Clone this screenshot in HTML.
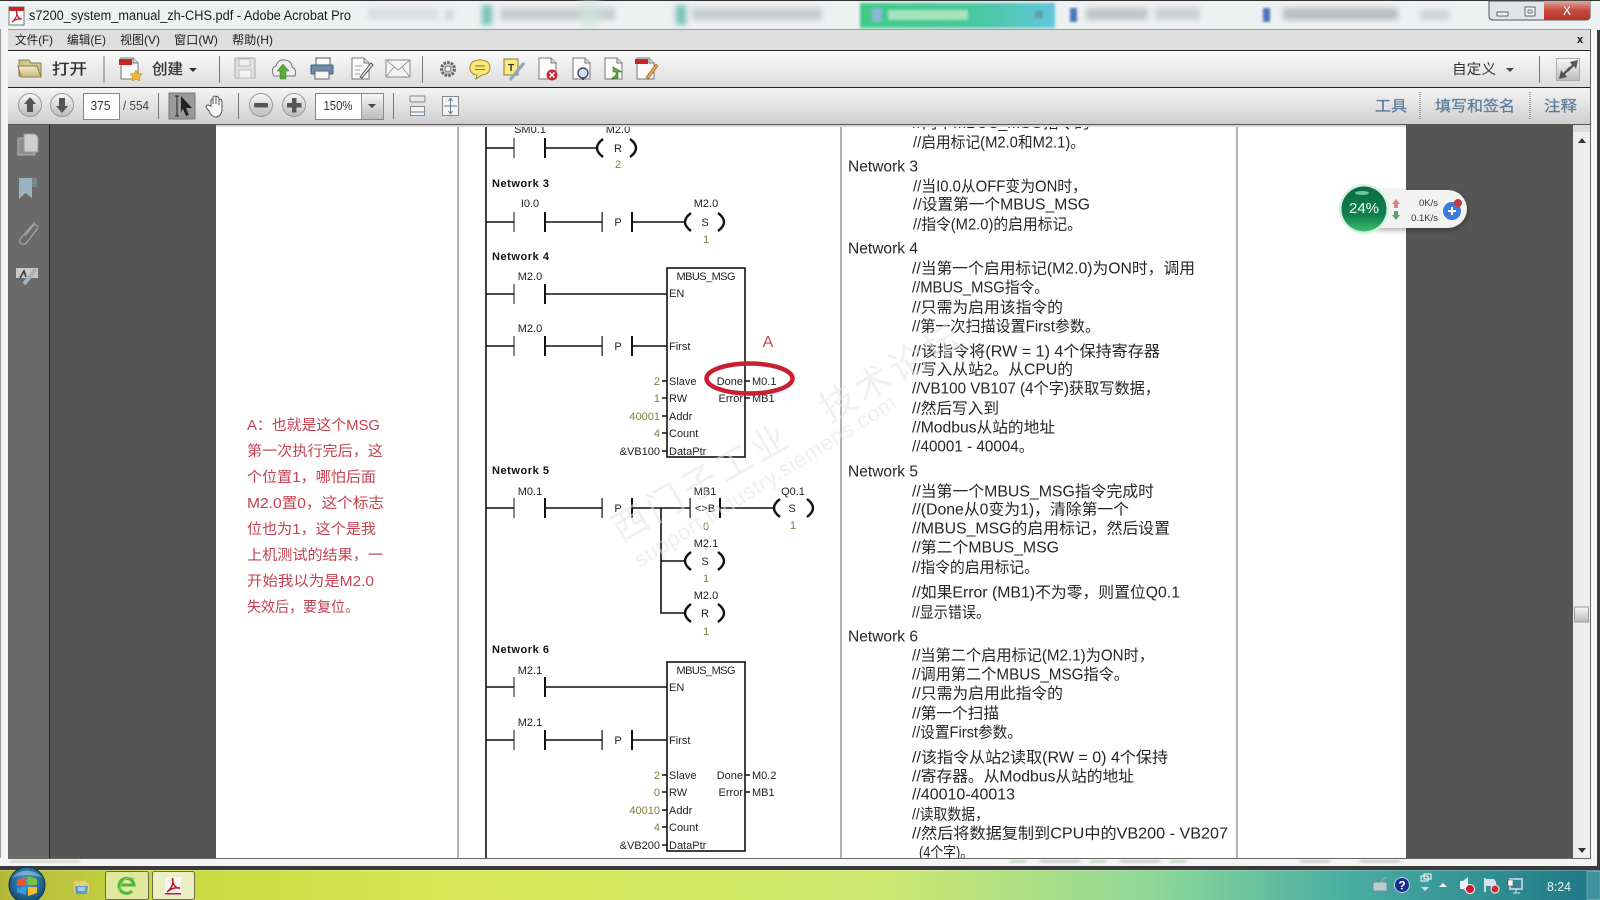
<!DOCTYPE html>
<html lang="zh"><head><meta charset="utf-8"><title>s7200_system_manual_zh-CHS.pdf - Adobe Acrobat Pro</title>
<style>
html,body{margin:0;padding:0;width:1600px;height:900px;overflow:hidden;background:#000}
svg{display:block}
text{font-family:"Liberation Sans","Noto Sans CJK SC",sans-serif}
.l{font-size:11px;fill:#222}
.m{text-anchor:middle}
.e{text-anchor:end}
.v{font-size:11px;fill:#7d7d3c;text-anchor:end}
.c{font-size:11px;fill:#7d7d3c;text-anchor:middle}
.n{font-size:11px;font-weight:bold;fill:#111}
.t{font-size:15.5px;fill:#262626}
.w{stroke:#111;stroke-width:1.6;fill:none}
.note{font-size:14.5px;fill:#c43f50}
.menu{font-size:12px;fill:#222}
.rt{font-size:15px;fill:#5f7d9c;stroke:#5f7d9c;stroke-width:.25}
</style></head><body>
<svg width="1600" height="900" viewBox="0 0 1600 900" xmlns="http://www.w3.org/2000/svg">
<defs>
<linearGradient id="gt" x1="0" y1="0" x2="0" y2="1"><stop offset="0" stop-color="#fafafa"/><stop offset="1" stop-color="#dcdcdc"/></linearGradient>
<linearGradient id="gb" x1="0" y1="0" x2="0" y2="1"><stop offset="0" stop-color="#f4f4f4"/><stop offset="1" stop-color="#cfcfcf"/></linearGradient>
<linearGradient id="gtask" x1="0" y1="0" x2="1" y2="0"><stop offset="0" stop-color="#b4b83a"/><stop offset=".1" stop-color="#c8d83e"/><stop offset=".3" stop-color="#d8ea58"/><stop offset=".55" stop-color="#cfe870"/><stop offset=".72" stop-color="#8fd898"/><stop offset=".84" stop-color="#4aaea2"/><stop offset="1" stop-color="#1f7686"/></linearGradient>
<linearGradient id="gtab" x1="0" y1="0" x2="1" y2="0"><stop offset="0" stop-color="#3fcb86"/><stop offset=".6" stop-color="#48c8a0"/><stop offset="1" stop-color="#62c6dc"/></linearGradient>
<linearGradient id="gred" x1="0" y1="0" x2="0" y2="1"><stop offset="0" stop-color="#e2a8a0"/><stop offset=".5" stop-color="#c8483c"/><stop offset="1" stop-color="#b83428"/></linearGradient>
<linearGradient id="gbtn" x1="0" y1="0" x2="0" y2="1"><stop offset="0" stop-color="#f8f8f8"/><stop offset="1" stop-color="#bbb"/></linearGradient>
<linearGradient id="ggreen" x1="0" y1="0" x2="0" y2="1"><stop offset="0" stop-color="#0c6a42"/><stop offset=".65" stop-color="#10804e"/><stop offset="1" stop-color="#3cc070"/></linearGradient>
<linearGradient id="gfold" x1="0" y1="0" x2="0" y2="1"><stop offset="0" stop-color="#f4ecc8"/><stop offset="1" stop-color="#cdb877"/></linearGradient>
<radialGradient id="gorb" cx=".5" cy=".4" r=".65"><stop offset="0" stop-color="#4aa4d8"/><stop offset="1" stop-color="#0a3f66"/></radialGradient>
<filter id="b3"><feGaussianBlur stdDeviation="3"/></filter>
<filter id="b1"><feGaussianBlur stdDeviation="1.4"/></filter>
<filter id="b05"><feGaussianBlur stdDeviation=".35"/></filter>
<filter id="sh" x="-20%" y="-30%" width="140%" height="170%"><feGaussianBlur stdDeviation="3"/></filter>
<g id="ct"><rect x="-.5" y="-10" width="1" height="20" fill="#111"/><rect x="30" y="-10" width="2" height="20" fill="#111"/></g>
<g id="pp"><rect x="-.5" y="-10" width="1.2" height="20" fill="#111"/><rect x="29" y="-10" width="2" height="20" fill="#111"/></g>
<g id="cl"><path d="M8-9Q-4 0 8 9M35-9Q47 0 35 9" fill="none" stroke="#111" stroke-width="2.4"/><path d="M0 0H2" stroke="#111" stroke-width="1.6"/></g>
<g id="doc"><path d="M1 0H13L18 5V21H1Z" fill="#fbfbfb" stroke="#777"/><path d="M13 0V5H18" fill="#ddd" stroke="#777"/></g>
</defs>

<!-- Desktop background / title bar -->
<rect width="1600" height="900" fill="#3c3c3c"/>
<rect x="0" y="0" width="1600" height="30" fill="#eef1f2"/>
<rect x="0" y="0" width="1600" height="1" fill="#333"/>
<g filter="url(#b3)">
<rect x="368" y="8" width="70" height="12" fill="#c4cdd0" opacity=".5"/>
<rect x="445" y="10" width="8" height="10" fill="#bcc6c8" opacity=".7"/>
<rect x="482" y="5" width="10" height="20" fill="#5fb8ac" opacity=".85"/>
<rect x="500" y="8" width="115" height="12" fill="#a8b4b8" opacity=".6"/>
<rect x="676" y="5" width="10" height="20" fill="#5fb8ac" opacity=".85"/>
<rect x="692" y="8" width="130" height="12" fill="#a8b4b8" opacity=".6"/>
<rect x="580" y="0" width="20" height="28" fill="#cfe8de" opacity=".6"/>
<rect x="1086" y="8" width="62" height="12" fill="#b0bac0" opacity=".8"/>
<rect x="1155" y="8" width="45" height="12" fill="#c0c8cc" opacity=".8"/>
<rect x="1283" y="8" width="115" height="12" fill="#a8b0b8" opacity=".8"/>
<rect x="1420" y="10" width="30" height="10" fill="#c4ccd0" opacity=".8"/>
</g>
<rect x="860" y="3" width="195" height="25" fill="url(#gtab)" filter="url(#b1)"/>
<g filter="url(#b1)"><rect x="872" y="8" width="10" height="14" fill="#8db8d8"/><rect x="888" y="10" width="80" height="10" fill="#a7e3bd"/><rect x="1035" y="11" width="8" height="7" fill="#5f9ca8"/>
<rect x="1070" y="8" width="7" height="14" fill="#4d74b8"/><rect x="1263" y="8" width="7" height="14" fill="#4d74b8"/></g>
<path d="M1489 1H1590V16Q1590 20 1586 20H1493Q1489 20 1489 16Z" fill="#dfe6ea" stroke="#555"/>
<path d="M1544 1H1590V16Q1590 20 1586 20H1544Z" fill="url(#gred)"/>
<rect x="1497" y="12" width="11" height="4" fill="#f2f2f2" stroke="#444" stroke-width=".8"/>
<rect x="1525" y="7" width="10" height="9" fill="#f2f2f2" stroke="#444" stroke-width=".8"/><rect x="1528" y="10" width="4" height="3" fill="none" stroke="#444" stroke-width=".7"/>
<text x="1567" y="15" font-size="13" font-weight="bold" fill="#fff" text-anchor="middle" stroke="#8a3028" stroke-width=".3">X</text>
<!-- Acrobat icon in title -->
<rect x="9" y="7" width="15" height="18" fill="#fff" stroke="#777"/><rect x="9" y="7" width="15" height="4" fill="#c8242c"/>
<path d="M12 22C15 20 18 15 16.500 11C16 15 19 19 22 19C18 18.500 14 20 12 22Z" fill="none" stroke="#c01820" stroke-width="1.200"/>
<text x="29" y="20" font-size="13.500" fill="#1a1a1a" textLength="322" lengthAdjust="spacingAndGlyphs">s7200_system_manual_zh-CHS.pdf - Adobe Acrobat Pro</text>

<!-- Window frame -->
<rect x="0" y="29" width="8" height="837" fill="#f2f2f2"/>
<rect x="0" y="29" width="1" height="840" fill="#999"/>
<rect x="1590" y="29" width="7" height="837" fill="#f6f6f6"/>

<!-- Viewer -->
<rect x="8" y="124" width="41" height="735" fill="#6a6a6a"/>
<rect x="49" y="124" width="1" height="735" fill="#222"/>
<rect x="50" y="124" width="166" height="735" fill="#555"/>
<rect x="216" y="124" width="1190" height="735" fill="#fff"/>
<rect x="1406" y="124" width="167" height="735" fill="#555"/>

<!-- Side panel icons -->
<g>
<rect x="18" y="138" width="17" height="17" fill="#8f8f8f" stroke="#b0b0b0"/>
<path d="M24 134H35L38 137V152H24Z" fill="#cfcfcf" stroke="#999"/>
<path d="M19 178H32V198L25.500 193L19 199Z" fill="#9bb2c2"/><path d="M32 178H37V187H32Z" fill="#75868f"/>
<path d="M35 222L21 238Q18 243 22 244Q25 245 28 241L37 229Q39 226 36 225Q34 224 32 227L25 236" fill="none" stroke="#a8a8a8" stroke-width="1.100"/>
<rect x="16" y="268" width="22" height="10" fill="#c8c8c8"/>
<path d="M20 278L24 271L26 277" fill="none" stroke="#333" stroke-width="1.500"/>
<path d="M24 284L36 269" stroke="#a0b4c4" stroke-width="4"/>
</g>

<!-- Page column rules -->
<rect x="457" y="124" width="2" height="735" fill="#b2b2b2"/>
<rect x="840" y="124" width="2" height="735" fill="#b2b2b2"/>
<rect x="1236" y="124" width="2" height="735" fill="#b2b2b2"/>

<!-- Side note -->
<g class="note" filter="url(#b05)">
<text class="note" x="247" y="430" textLength="133" lengthAdjust="spacingAndGlyphs">A：也就是这个MSG</text>
<text class="note" x="247" y="456" textLength="136" lengthAdjust="spacingAndGlyphs">第一次执行完后，这</text>
<text class="note" x="247" y="482" textLength="129" lengthAdjust="spacingAndGlyphs">个位置1，哪怕后面</text>
<text class="note" x="247" y="508" textLength="137" lengthAdjust="spacingAndGlyphs">M2.0置0，这个标志</text>
<text class="note" x="247" y="534" textLength="129" lengthAdjust="spacingAndGlyphs">位也为1，这个是我</text>
<text class="note" x="247" y="560" textLength="136" lengthAdjust="spacingAndGlyphs">上机测试的结果，一</text>
<text class="note" x="247" y="586" textLength="127" lengthAdjust="spacingAndGlyphs">开始我以为是M2.0</text>
<text class="note" x="247" y="612" textLength="112" lengthAdjust="spacingAndGlyphs">失效后，要复位。</text>
</g>

<!-- Ladder -->
<rect x="485.200" y="124" width="1.600" height="735" fill="#111"/>
<g class="w">
<path d="M486 148H514M545 148H595"/>
<path d="M486 222H514M545 222H602M632 222H683"/>
<path d="M486 294H514M545 294H667"/>
<path d="M486 346H514M545 346H602M632 346H667"/>
<rect x="667" y="268" width="78" height="189"/>
<path d="M662 381H667M662 398H667M662 416H667M662 433H667M662 451H667M745 381H750M745 398H750"/>
<path d="M486 508H514M545 508H602M632 508H690M720 508H772"/>
<path d="M661 508V613H683M661 561H683"/>
<path d="M486 687H514M545 687H667"/>
<path d="M486 740H514M545 740H602M632 740H667"/>
<rect x="667" y="662" width="78" height="189"/>
<path d="M662 775H667M662 792H667M662 810H667M662 827H667M662 845H667M745 775H750M745 792H750"/>
</g>
<use href="#ct" x="514" y="148"/><use href="#cl" x="595" y="148"/>
<use href="#ct" x="514" y="222"/><use href="#pp" x="602" y="222"/><use href="#cl" x="683" y="222"/>
<use href="#ct" x="514" y="294"/>
<use href="#ct" x="514" y="346"/><use href="#pp" x="602" y="346"/>
<use href="#ct" x="514" y="508"/><use href="#pp" x="602" y="508"/><use href="#pp" x="690" y="508"/><use href="#cl" x="772" y="508"/>
<use href="#cl" x="683" y="561"/><use href="#cl" x="683" y="613"/>
<use href="#ct" x="514" y="687"/>
<use href="#ct" x="514" y="740"/><use href="#pp" x="602" y="740"/>

<text class="l m" x="530" y="133">SM0.1</text><text class="l m" x="618" y="133">M2.0</text>
<text class="l m" x="618" y="152">R</text><text class="c" x="618" y="168">2</text>
<text class="n" x="492" y="187" textLength="57">Network 3</text>
<text class="l m" x="530" y="207">I0.0</text><text class="l m" x="706" y="207">M2.0</text>
<text class="l m" x="618" y="226">P</text><text class="l m" x="705" y="226">S</text><text class="c" x="706" y="243">1</text>
<text class="n" x="492" y="260" textLength="57">Network 4</text>
<text class="l m" x="530" y="280">M2.0</text>
<text class="l m" x="706" y="280" textLength="59">MBUS_MSG</text>
<text class="l" x="669" y="297">EN</text>
<text class="l m" x="530" y="332">M2.0</text>
<text class="l m" x="618" y="350">P</text>
<text class="l" x="669" y="350">First</text>
<text class="l" x="669" y="385">Slave</text><text class="l" x="669" y="402">RW</text><text class="l" x="669" y="420">Addr</text><text class="l" x="669" y="437">Count</text><text class="l" x="669" y="455">DataPtr</text>
<text class="v" x="660" y="385">2</text><text class="v" x="660" y="402">1</text><text class="v" x="660" y="420">40001</text><text class="v" x="660" y="437">4</text><text class="l e" x="660" y="455">&amp;VB100</text>
<text class="l e" x="743" y="385">Done</text><text class="l e" x="743" y="402">Error</text>
<text class="l" x="752" y="385">M0.1</text><text class="l" x="752" y="402">MB1</text>
<ellipse cx="749.500" cy="378.500" rx="43" ry="15" fill="none" stroke="#c8202f" stroke-width="4.500"/>
<text x="768" y="347" font-size="16" fill="#c04850" text-anchor="middle">A</text>

<text class="n" x="492" y="474" textLength="57">Network 5</text>
<text class="l m" x="530" y="495">M0.1</text><text class="l m" x="705" y="495">MB1</text><text class="l m" x="793" y="495">Q0.1</text>
<text class="l m" x="618" y="512">P</text><text class="l m" x="705" y="512">&lt;&gt;B</text><text class="l m" x="792" y="512">S</text>
<text class="c" x="706" y="530">0</text><text class="c" x="793" y="529">1</text>
<text class="l m" x="706" y="547">M2.1</text><text class="l m" x="705" y="565">S</text><text class="c" x="706" y="582">1</text>
<text class="l m" x="706" y="599">M2.0</text><text class="l m" x="705" y="617">R</text><text class="c" x="706" y="635">1</text>
<text class="n" x="492" y="653" textLength="57">Network 6</text>
<text class="l m" x="530" y="674">M2.1</text>
<text class="l m" x="706" y="674" textLength="59">MBUS_MSG</text>
<text class="l" x="669" y="691">EN</text>
<text class="l m" x="530" y="726">M2.1</text>
<text class="l m" x="618" y="744">P</text>
<text class="l" x="669" y="744">First</text>
<text class="l" x="669" y="779">Slave</text><text class="l" x="669" y="796">RW</text><text class="l" x="669" y="814">Addr</text><text class="l" x="669" y="831">Count</text><text class="l" x="669" y="849">DataPtr</text>
<text class="v" x="660" y="779">2</text><text class="v" x="660" y="796">0</text><text class="v" x="660" y="814">40010</text><text class="v" x="660" y="831">4</text><text class="l e" x="660" y="849">&amp;VB200</text>
<text class="l e" x="743" y="779">Done</text><text class="l e" x="743" y="796">Error</text>
<text class="l" x="752" y="779">M0.2</text><text class="l" x="752" y="796">MB1</text>

<!-- Right column -->
<g filter="url(#b05)">
<text class="t" x="913" y="128" textLength="177" lengthAdjust="spacingAndGlyphs">//两个MBUS_MSG指令的</text>
<text class="t" x="913" y="147.500" textLength="172" lengthAdjust="spacingAndGlyphs">//启用标记(M2.0和M2.1)。</text>
<text class="t" x="848" y="171.500" textLength="70" lengthAdjust="spacingAndGlyphs">Network 3</text>
<text class="t" x="913" y="191.500" textLength="174" lengthAdjust="spacingAndGlyphs">//当I0.0从OFF变为ON时，</text>
<text class="t" x="913" y="209.500" textLength="177" lengthAdjust="spacingAndGlyphs">//设置第一个MBUS_MSG</text>
<text class="t" x="913" y="229.500" textLength="169" lengthAdjust="spacingAndGlyphs">//指令(M2.0)的启用标记。</text>
<text class="t" x="848" y="253.500" textLength="70" lengthAdjust="spacingAndGlyphs">Network 4</text>
<text class="t" x="912" y="273.500" textLength="283" lengthAdjust="spacingAndGlyphs">//当第一个启用标记(M2.0)为ON时，调用</text>
<text class="t" x="912" y="292.500" textLength="137" lengthAdjust="spacingAndGlyphs">//MBUS_MSG指令。</text>
<text class="t" x="912" y="312.500" textLength="151" lengthAdjust="spacingAndGlyphs">//只需为启用该指令的</text>
<text class="t" x="912" y="331.500" textLength="188" lengthAdjust="spacingAndGlyphs">//第一次扫描设置First参数。</text>
<text class="t" x="912" y="356.500" textLength="248" lengthAdjust="spacingAndGlyphs">//该指令将(RW = 1) 4个保持寄存器</text>
<text class="t" x="912" y="374.500" textLength="161" lengthAdjust="spacingAndGlyphs">//写入从站2。从CPU的</text>
<text class="t" x="912" y="393.500" textLength="248" lengthAdjust="spacingAndGlyphs">//VB100 VB107 (4个字)获取写数据，</text>
<text class="t" x="912" y="413.500" textLength="87" lengthAdjust="spacingAndGlyphs">//然后写入到</text>
<text class="t" x="912" y="432.500" textLength="143" lengthAdjust="spacingAndGlyphs">//Modbus从站的地址</text>
<text class="t" x="912" y="451.500" textLength="122" lengthAdjust="spacingAndGlyphs">//40001 - 40004。</text>
<text class="t" x="848" y="476.500" textLength="70" lengthAdjust="spacingAndGlyphs">Network 5</text>
<text class="t" x="912" y="496.500" textLength="242" lengthAdjust="spacingAndGlyphs">//当第一个MBUS_MSG指令完成时</text>
<text class="t" x="912" y="514.500" textLength="217" lengthAdjust="spacingAndGlyphs">//(Done从0变为1)，清除第一个</text>
<text class="t" x="912" y="533.500" textLength="258" lengthAdjust="spacingAndGlyphs">//MBUS_MSG的启用标记，然后设置</text>
<text class="t" x="912" y="552.500" textLength="147" lengthAdjust="spacingAndGlyphs">//第二个MBUS_MSG</text>
<text class="t" x="912" y="572.500" textLength="127" lengthAdjust="spacingAndGlyphs">//指令的启用标记。</text>
<text class="t" x="912" y="597.500" textLength="268" lengthAdjust="spacingAndGlyphs">//如果Error (MB1)不为零，则置位Q0.1</text>
<text class="t" x="912" y="617.500" textLength="78" lengthAdjust="spacingAndGlyphs">//显示错误。</text>
<text class="t" x="848" y="641.500" textLength="70" lengthAdjust="spacingAndGlyphs">Network 6</text>
<text class="t" x="912" y="660.500" textLength="242" lengthAdjust="spacingAndGlyphs">//当第二个启用标记(M2.1)为ON时，</text>
<text class="t" x="912" y="679.500" textLength="217" lengthAdjust="spacingAndGlyphs">//调用第二个MBUS_MSG指令。</text>
<text class="t" x="912" y="698.500" textLength="151" lengthAdjust="spacingAndGlyphs">//只需为启用此指令的</text>
<text class="t" x="912" y="718.500" textLength="87" lengthAdjust="spacingAndGlyphs">//第一个扫描</text>
<text class="t" x="912" y="737.500" textLength="110" lengthAdjust="spacingAndGlyphs">//设置First参数。</text>
<text class="t" x="912" y="762.500" textLength="256" lengthAdjust="spacingAndGlyphs">//该指令从站2读取(RW = 0) 4个保持</text>
<text class="t" x="912" y="781.500" textLength="222" lengthAdjust="spacingAndGlyphs">//寄存器。从Modbus从站的地址</text>
<text class="t" x="912" y="799.500" textLength="103" lengthAdjust="spacingAndGlyphs">//40010-40013</text>
<text class="t" x="912" y="819.500" textLength="77" lengthAdjust="spacingAndGlyphs">//读取数据，</text>
<text class="t" x="912" y="838.500" textLength="316" lengthAdjust="spacingAndGlyphs">//然后将数据复制到CPU中的VB200 - VB207</text>
<text class="t" x="919" y="857.500" textLength="54" lengthAdjust="spacingAndGlyphs">(4个字)。</text>
</g>

<!-- Watermark, laid over the page content -->
<g fill="#e4e4e4" opacity=".55" filter="url(#b05)">
<text transform="translate(621 543) rotate(-30)" style="font-size:36px;letter-spacing:4px">西门子工业　技术论坛</text>
<text transform="translate(640 568) rotate(-32)" style="font-size:22px;letter-spacing:.5px">support.industry.siemens.com</text>
</g>

<!-- Scrollbar -->
<rect x="1573" y="124" width="17" height="735" fill="#eeeeee"/>
<rect x="1573" y="124" width="17" height="8" fill="#dcdcdc"/>
<path d="M1582 138L1586 143H1578Z" fill="#333"/>
<path d="M1578 848H1586L1582 853Z" fill="#333"/>
<rect x="1574.500" y="607" width="14" height="15" fill="url(#gbtn)" stroke="#999"/>
<rect x="1590" y="29" width="1" height="830" fill="#666"/>

<!-- Bottom frame and taskbar -->
<rect x="0" y="858" width="1597" height="8" fill="#f4f4f4"/>
<rect x="8" y="858" width="1583" height="1" fill="#666"/>
<g filter="url(#b1)"><rect x="10" y="860" width="70" height="3" fill="#d8d4c8"/>
<rect x="1010" y="860" width="16" height="3" fill="#b8dcc0"/><rect x="1040" y="860" width="40" height="3" fill="#ccc"/><rect x="1090" y="860" width="16" height="3" fill="#b8dcc0"/><rect x="1120" y="860" width="40" height="3" fill="#ccc"/><rect x="1170" y="860" width="16" height="3" fill="#b8dcc0"/><rect x="1300" y="860" width="30" height="3" fill="#ccc"/><rect x="1360" y="860" width="40" height="3" fill="#ccc"/></g>
<rect x="0" y="866" width="1600" height="4" fill="#3a3a3a"/>
<rect x="0" y="870" width="1600" height="30" fill="url(#gtask)"/>
<rect x="0" y="870" width="1600" height="1" fill="#fff" opacity=".25"/>
<!-- Start orb -->
<circle cx="27" cy="885" r="18" fill="url(#gorb)" stroke="#0c3550"/>
<path d="M17 880L26 877V885L17 886Z" fill="#e8582c"/><path d="M28 876L37 879V885L28 885Z" fill="#7cc040"/><path d="M17 888L26 887V895L17 892Z" fill="#3c9ae0"/><path d="M28 887L37 887V893L28 896Z" fill="#f4c030"/>
<path d="M11 878Q27 863 43 878Q27 872 11 878Z" fill="#fff" opacity=".35"/>
<!-- Folder -->
<path d="M74 881H85L87 883H89V893H74Z" fill="#e4ce80"/><path d="M75 886H88L87 894H76Z" fill="#5c9ccc"/><rect x="78" y="887" width="7" height="4" fill="#a8cce4"/>
<!-- Task buttons -->
<rect x="105.500" y="871.500" width="43" height="28" rx="2" fill="#e0e8a0" stroke="#6a7040"/>
<rect x="152.500" y="871.500" width="42" height="28" rx="2" fill="#ecefc4" stroke="#6a7040"/>
<path d="M120 885H134A7.500 7.500 0 1 0 132 891" fill="none" stroke="#4cb838" stroke-width="3"/>
<path d="M119 892Q122 874 135 879" fill="none" stroke="#88d060" stroke-width="1.200"/>
<rect x="165" y="877" width="16" height="18" fill="#f6f6f6"/>
<path d="M167 892C171 889 174 884 172.500 878C172 884 176 889 180 888C175 887 170 889 167 892Z" fill="none" stroke="#c01820" stroke-width="1.500"/>
<rect x="165" y="893" width="16" height="1.500" fill="#c01820"/>
<!-- Tray -->
<rect x="1373" y="882" width="14" height="9" rx="1" fill="#b4d0c8" stroke="#789"/>
<path d="M1381 882Q1383 878 1387 877" fill="none" stroke="#9ab" />
<circle cx="1402" cy="885" r="7.500" fill="#1c2a8c" stroke="#c0d4e8"/>
<text x="1402" y="889.500" font-size="12" font-weight="bold" fill="#fff" text-anchor="middle">?</text>
<rect x="1421" y="876" width="7" height="5" fill="none" stroke="#fff"/><rect x="1424" y="874" width="7" height="5" fill="none" stroke="#fff"/>
<path d="M1421 887H1429L1425 891Z" fill="#cde"/>
<path d="M1439 887L1443 883L1447 887Z" fill="#fff"/>
<path d="M1460 881H1463L1468 877V892L1463 889H1460Z" fill="#eef"/>
<circle cx="1470" cy="889" r="4.500" fill="#c81830" stroke="#fff"/>
<path d="M1485 878V892" stroke="#fff" stroke-width="1.500"/><path d="M1486 879H1494L1496 882V886H1486Z" fill="#dde"/>
<circle cx="1495" cy="889" r="4" fill="#d02828" stroke="#fff"/>
<rect x="1510" y="879" width="12" height="10" fill="none" stroke="#dde" stroke-width="1.500"/><rect x="1508" y="880" width="5" height="6" fill="#fff" stroke="#444" stroke-width=".5"/>
<path d="M1513 893H1520M1516 889V893" stroke="#dde"/>
<text x="1559" y="891" font-size="12.500" fill="#eaf4f4" text-anchor="middle" textLength="24" lengthAdjust="spacingAndGlyphs">8:24</text>
<rect x="1587" y="871.500" width="13" height="28" fill="#5aa8b0" opacity=".55" stroke="#9cd0d4"/>

<!-- Menu bar -->
<rect x="8" y="29" width="1582" height="21" fill="#dedede"/>
<rect x="8" y="29" width="1582" height="1" fill="#9a9a9a"/>
<text class="menu" x="15" y="44" textLength="38" lengthAdjust="spacingAndGlyphs">文件(F)</text>
<text class="menu" x="67" y="44" textLength="39" lengthAdjust="spacingAndGlyphs">编辑(E)</text>
<text class="menu" x="120" y="44" textLength="40" lengthAdjust="spacingAndGlyphs">视图(V)</text>
<text class="menu" x="174" y="44" textLength="44" lengthAdjust="spacingAndGlyphs">窗口(W)</text>
<text class="menu" x="232" y="44" textLength="41" lengthAdjust="spacingAndGlyphs">帮助(H)</text>
<text x="1580" y="43" font-size="11" font-weight="bold" fill="#111" text-anchor="middle">x</text>
<rect x="8" y="50" width="1582" height="1" fill="#222"/>

<!-- Toolbar 1 -->
<rect x="8" y="51" width="1582" height="36" fill="url(#gt)"/>
<rect x="8" y="87" width="1582" height="1" fill="#222"/>
<path d="M19 60H29L31 63H41V76H19Z" fill="#d3c48e" stroke="#8a7c50"/>
<path d="M18 66H37L41 77H21Z" fill="url(#gfold)" stroke="#8a7c50"/>
<text x="52" y="74" font-size="15" fill="#333" stroke="#333" stroke-width=".3" textLength="35" lengthAdjust="spacingAndGlyphs">打开</text>
<rect x="103.500" y="56" width="1" height="27" fill="#777"/>
<g transform="translate(120 58)"><use href="#doc"/><rect x="-1" y="1" width="13" height="6" fill="#c8242c"/></g>
<path d="M136 70L138 73.500L142 74L139.500 77L140 81L136 79L132 81L132.500 77L130 74L134 73.500Z" fill="#f0b838" stroke="#b8801c" stroke-width=".5"/>
<text x="152" y="74" font-size="15" fill="#333" stroke="#333" stroke-width=".3" textLength="31" lengthAdjust="spacingAndGlyphs">创建</text>
<path d="M189 68H197L193 72Z" fill="#333"/>
<rect x="219" y="56" width="1" height="27" fill="#777"/>
<!-- save -->
<rect x="235" y="58" width="20" height="20" rx="1" fill="#e2e2e2" stroke="#aaa"/><rect x="239" y="59" width="11" height="7" fill="#f0f0f0" stroke="#bbb"/><rect x="239" y="70" width="12" height="8" fill="#f4f4f4" stroke="#bbb"/>
<!-- upload -->
<path d="M274 76Q270 68 276 66Q278 59 285 60Q292 61 292 67Q297 69 295 76Z" fill="#f0f0f0" stroke="#777"/><path d="M283 64L289 71H286V79H280V71H277Z" fill="#5caa3c" stroke="#2e7a20" stroke-width=".5"/>
<!-- print -->
<rect x="316" y="58" width="14" height="8" fill="#fafafa" stroke="#555"/><rect x="311" y="65" width="22" height="9" rx="1" fill="#6d8cac" stroke="#3c5a78"/><rect x="315" y="71" width="14" height="8" fill="#f6f6f6" stroke="#666"/>
<!-- edit doc -->
<g transform="translate(351 58)"><use href="#doc"/></g><path d="M355 66H362M355 70H360M355 74H360" stroke="#999"/><path d="M360 77L371 63L373 65L362 78Z" fill="#eee" stroke="#555"/>
<!-- mail -->
<rect x="386" y="60" width="24" height="17" fill="#f4f4f4" stroke="#888"/><path d="M386 60L398 70L410 60M386 77L394 67M410 77L402 67" fill="none" stroke="#999"/>
<rect x="422" y="56" width="1" height="27" fill="#777"/>
<!-- gear -->
<circle cx="448" cy="69" r="6.500" fill="#cfcfcf" stroke="#666" stroke-width="3" stroke-dasharray="2.500 1.200"/><circle cx="448" cy="69" r="3" fill="#eee" stroke="#777"/>
<!-- speech -->
<path d="M480 60Q470 60 470 68Q470 74 477 75L476 79L482 75Q490 74 490 68Q490 60 480 60Z" fill="#f8e878" stroke="#9a8a30"/><path d="M475 66H485M475 69.500H485" stroke="#8a7a20"/>
<!-- note pen -->
<rect x="504" y="59" width="14" height="16" fill="#f8e888" stroke="#8a7a30"/><text x="511" y="71" font-size="10" font-weight="bold" fill="#333" text-anchor="middle">T</text><path d="M510 80L524 63" stroke="#8aa8b8" stroke-width="3"/>
<!-- doc x -->
<g transform="translate(538 58)"><use href="#doc"/></g><circle cx="552" cy="75" r="5.500" fill="#c82838"/><path d="M549.500 72.500L554.500 77.500M554.500 72.500L549.500 77.500" stroke="#fff" stroke-width="1.500"/>
<!-- doc search -->
<g transform="translate(572 58)"><use href="#doc"/></g><circle cx="583" cy="73" r="5" fill="#cfe0ec" stroke="#446" stroke-width="1.400"/><path d="M583 78V80" stroke="#446" stroke-width="2"/>
<!-- doc arrow -->
<g transform="translate(604 58)"><use href="#doc"/></g><path d="M613 67L622 72H618V78L611 79L616 75V72H613Z" fill="#64a83c" stroke="#33701c" stroke-width=".6"/>
<!-- doc pen -->
<g transform="translate(636 58)"><use href="#doc"/><rect x="-1" y="1" width="13" height="5" fill="#c8242c"/></g><path d="M646 77L656 64L658 66L648 79Z" fill="#e8a048" stroke="#8a5a20" stroke-width=".6"/>
<!-- right -->
<text x="1452" y="74" font-size="14" fill="#333" textLength="44" lengthAdjust="spacingAndGlyphs">自定义</text>
<path d="M1506 68H1514L1510 72Z" fill="#444"/>
<rect x="1539" y="56" width="1" height="27" fill="#777"/>
<rect x="1556.500" y="58.500" width="23" height="22" fill="url(#gbtn)" stroke="#aaa"/>
<path d="M1578 60L1570 62L1572 65L1566 70L1568 72L1574 66L1576 69ZM1559 79L1567 77L1565 74L1571 69L1569 67L1563 73L1561 70Z" fill="#555"/>

<!-- Toolbar 2 -->
<rect x="8" y="88" width="1582" height="36" fill="url(#gb)"/>
<rect x="8" y="124" width="1582" height="1" fill="#555"/>
<rect x="216" y="125" width="1190" height="2" fill="#d8d8d8"/>
<circle cx="30" cy="105" r="11.500" fill="url(#gbtn)" stroke="#999"/><path d="M30 97L36 104H33V112H27V104H24Z" fill="#555"/>
<circle cx="62" cy="105" r="11.500" fill="url(#gbtn)" stroke="#999"/><path d="M62 113L68 106H65V98H59V106H56Z" fill="#555"/>
<rect x="83.500" y="93.500" width="36" height="26" fill="#fff" stroke="#888"/>
<text x="100.500" y="110" font-size="13" fill="#333" text-anchor="middle" textLength="20" lengthAdjust="spacingAndGlyphs">375</text>
<text x="123" y="110" font-size="13" fill="#444" textLength="26" lengthAdjust="spacingAndGlyphs">/ 554</text>
<rect x="158" y="93" width="1" height="26" fill="#777"/>
<rect x="169" y="93" width="26" height="26" fill="#9a9a9a" stroke="#777"/>
<path d="M175 96H179M177 96V116M175 116H179" stroke="#222" fill="none"/><path d="M181 96L192 108H186L189 115L186 116L183 109L181 112Z" fill="#222"/>
<path d="M211 106V100Q212 98 213 100V104V97Q214 95 216 97V104V97Q217 95 219 98V105V100Q221 98 222 101V110Q221 117 215 117Q211 116 209 111L206 107Q206 105 208 105Z" fill="#fafafa" stroke="#555"/>
<rect x="238" y="93" width="1" height="26" fill="#777"/>
<circle cx="261" cy="105" r="11.500" fill="url(#gbtn)" stroke="#999"/><rect x="254" y="103" width="14" height="4.500" rx="1" fill="#555"/>
<circle cx="294" cy="105" r="11.500" fill="url(#gbtn)" stroke="#999"/><path d="M287 103H292V98H296.500V103H301.500V107.500H296.500V112.500H292V107.500H287Z" fill="#555"/>
<rect x="315.500" y="93.500" width="68" height="26" fill="#fff" stroke="#888"/>
<rect x="361" y="94" width="22" height="25" fill="url(#gbtn)"/><rect x="361" y="94" width="1" height="25" fill="#999"/>
<path d="M368 104H376L372 108Z" fill="#444"/>
<text x="338" y="110" font-size="13" fill="#333" text-anchor="middle" textLength="29" lengthAdjust="spacingAndGlyphs">150%</text>
<rect x="393" y="93" width="1" height="26" fill="#777"/>
<path d="M410 96H425M410 102H425M410 96V102M425 96V102" stroke="#888" fill="#eee"/><rect x="410.500" y="106.500" width="14" height="9" fill="#f4f4f4" stroke="#888"/><path d="M411 112H424" stroke="#5d88b4"/>
<rect x="442.500" y="96.500" width="16" height="19" fill="#f4f4f4" stroke="#888"/><path d="M450.500 98V114M444 106H457M450.500 98L448.500 101M450.500 98L452.500 101M450.500 114L448.500 111M450.500 114L452.500 111" stroke="#5d7a98" fill="none"/>
<text class="rt" x="1375" y="111" textLength="32" lengthAdjust="spacingAndGlyphs">工具</text>
<path d="M1420 92V119" stroke="#666" stroke-dasharray="1 1"/>
<text class="rt" x="1435" y="111" textLength="80" lengthAdjust="spacingAndGlyphs">填写和签名</text>
<path d="M1530 92V119" stroke="#666" stroke-dasharray="1 1"/>
<text class="rt" x="1544" y="111" textLength="33" lengthAdjust="spacingAndGlyphs">注释</text>

<!-- Floating widget -->
<rect x="1362" y="192" width="105" height="38" rx="19" fill="#000" opacity=".35" filter="url(#sh)"/>
<path d="M1364 190H1448A19 19 0 0 1 1448 228H1364Z" fill="#f2f2f2"/>
<circle cx="1364" cy="209" r="25" fill="#d8efe2"/>
<circle cx="1364" cy="209" r="22.500" fill="url(#ggreen)"/>
<ellipse cx="1362" cy="193" rx="7" ry="2" fill="#6ac898"/>
<text x="1364" y="213" font-size="15" fill="#f4fff8" text-anchor="middle">24%</text>
<path d="M1396 199L1400 204H1398V208H1394V204H1392Z" fill="#d88a80"/>
<path d="M1396 220L1400 215H1398V211H1394V215H1392Z" fill="#5aa070"/>
<text x="1438" y="206" font-size="9.500" fill="#333" text-anchor="end">0K/s</text>
<text x="1438" y="221" font-size="9.500" fill="#333" text-anchor="end">0.1K/s</text>
<circle cx="1452" cy="211" r="9" fill="#3c7cd8"/>
<path d="M1448 211H1456M1452 207V215" stroke="#fff" stroke-width="2"/>
<circle cx="1458" cy="203" r="4" fill="#c83838"/>
</svg>
</body></html>
